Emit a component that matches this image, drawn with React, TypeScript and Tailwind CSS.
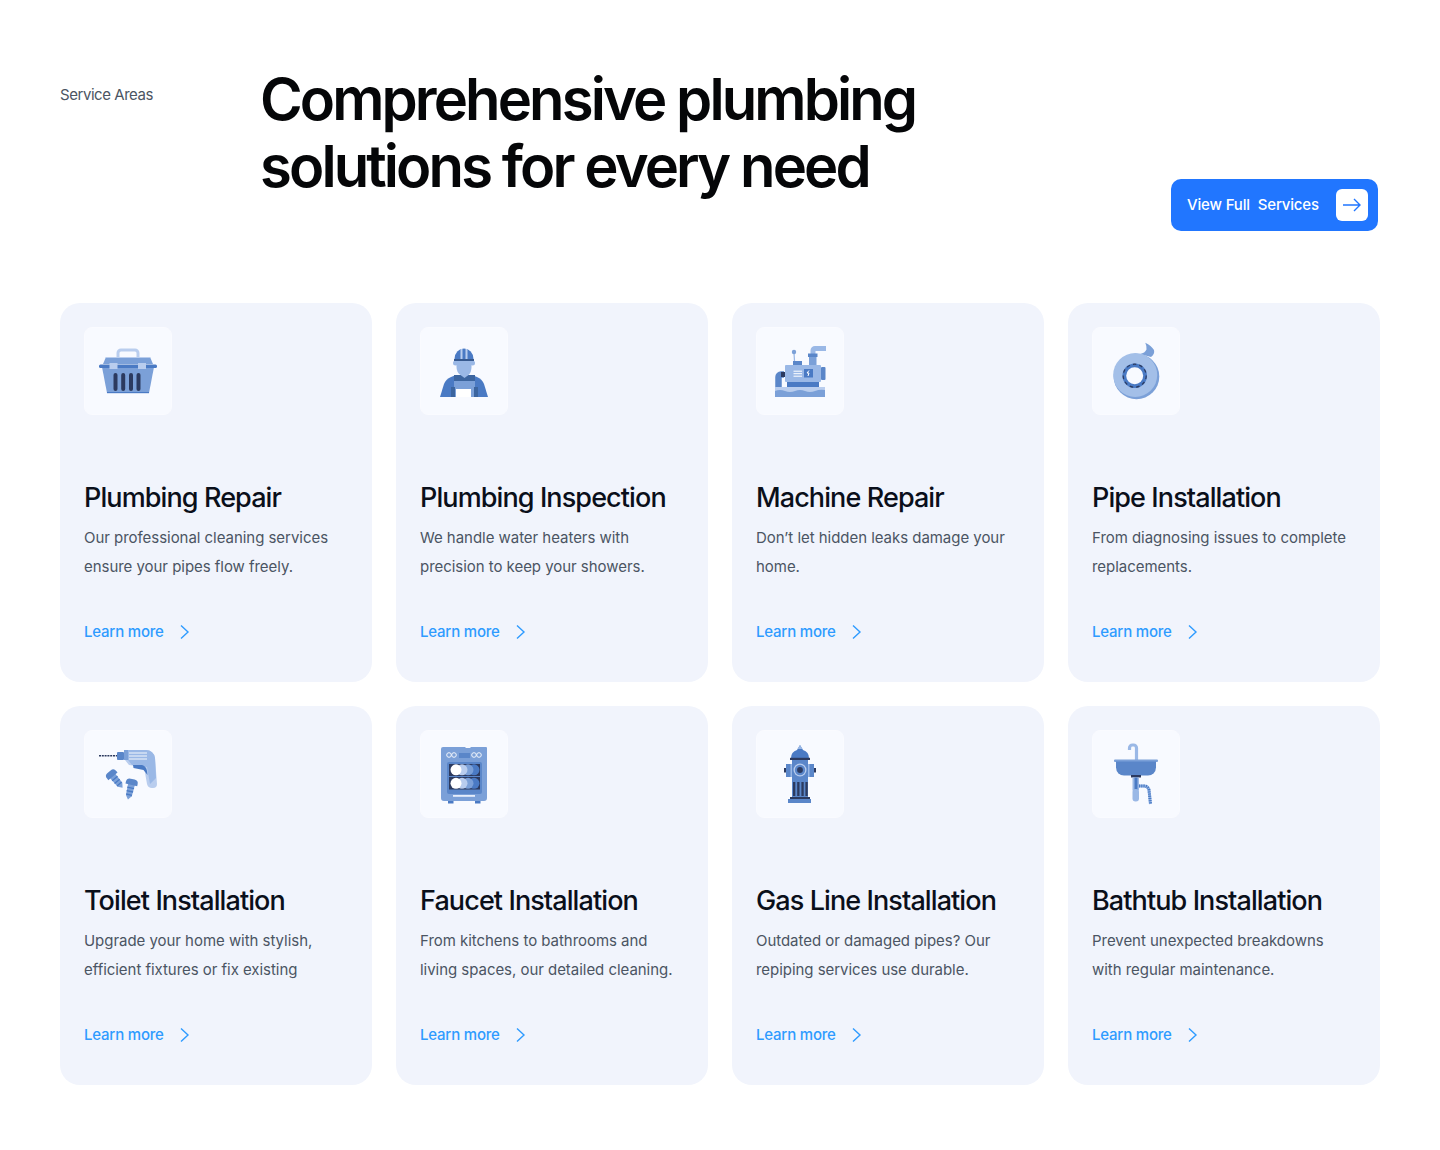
import React from "react";

const M = "#5a86c9";
const L = "#9ab8e6";
const P = "#b9cdee";
const D = "#2c3a5f";
const B = "#4a7ac4";
const S = "#7ba0d8";

const Basket = () => (
  <>
    <path d="M34 31v-5a3 3 0 0 1 3-3h14a3 3 0 0 1 3 3v5" fill="none" stroke={P} strokeWidth="3" />
    <path d="M22 30h44l3 7H19z" fill={S} />
    <path d="M22 30h44l0.500 1H21.500z" fill={P} />
    <path d="M18 40h52l-5 26H23z" fill={S} />
    <rect x="15" y="37.500" width="58" height="3.500" rx="1.500" fill={B} />
    <rect x="23" y="65" width="42" height="1.200" fill={B} />
    <rect x="25.500" y="36" width="8" height="6" fill={P} />
    <rect x="54" y="36" width="8" height="6" fill={P} />
    {[29.5, 37.2, 45, 52.5].map((x) => (
      <rect key={x} x={x} y="46" width="4" height="18" rx="2" fill={D} />
    ))}
  </>
);
const Worker = () => (
  <>
    <path d="M20 70l4-13q2-5 7-7l5-2h16l5 2q5 2 7 7l4 13z" fill={B} />
    <path d="M34 70V53h21v17z" fill={S} />
    <path d="M34 48h21v6H34z" fill="#3c659f" />
    <path d="M31 60h4v10h-4zM54 60h4v10h-4z" fill="#3c659f" />
    <rect x="36" y="62" width="15" height="8" fill="#fff" />
    <circle cx="35.500" cy="36" r="2.500" fill={L} />
    <circle cx="52.500" cy="36" r="2.500" fill={L} />
    <path d="M36.500 32h15v8q0 5-3 8l-4 3-4-3q-4-3-4-8z" fill={L} />
    <path d="M34.500 32a9.500 10.500 0 0 1 19 0v0.500h-19z" fill={B} />
    <path d="M40.500 22h2v10h-2zM45.500 22h2v10h-2z" fill={P} />
    <rect x="34" y="32" width="20" height="2" fill="#36598f" />
  </>
);
const Machine = () => (
  <>
    <path d="M22.500 62V50a2.500 2.500 0 0 1 2.500-2.500h3" fill="none" stroke={M} strokeWidth="6.500" />
    <rect x="25" y="45" width="4.500" height="5" fill={D} />
    <rect x="19" y="60" width="50" height="10" fill={P} />
    <path d="M19 64q5-2 10 0t10 0 10 0 10 0 10-1v7H19z" fill={S} />
    <rect x="31" y="55" width="32" height="5" fill={B} />
    <rect x="29" y="38" width="36" height="17" rx="1" fill={L} />
    <rect x="65" y="40" width="4.500" height="13" rx="1" fill={M} />
    <rect x="48" y="42" width="9" height="8.500" fill={B} />
    <path d="M53 43.500l-2 2.500h2l-1 3" stroke="#fff" strokeWidth="1" fill="none" />
    <path d="M37.500 44.200h8.500M37.500 46.700h8.500M37.500 49.200h8.500" stroke="#fff" strokeWidth="1" />
    <rect x="37" y="34" width="9" height="4" fill={M} />
    <path d="M38.500 34l-0.500-8" stroke={L} strokeWidth="1.300" />
    <circle cx="38" cy="25" r="2.200" fill={S} />
    <path d="M57 27v-3.500a2 2 0 0 1 2-2h11" fill="none" stroke={L} strokeWidth="5" />
    <rect x="52" y="26.500" width="9.500" height="3.500" fill={M} />
    <rect x="53" y="30" width="7.500" height="8" fill={S} />
  </>
);
const Tape = () => (
  <>
    <path d="M53.300 15.700q6 3 8.700 7.300 1 4-3 7l-11-3q5-1 6.500-4.500 0.500-3-1.200-6.800z" fill={S} />
    <circle cx="44.500" cy="49.500" r="22.800" fill={S} />
    <circle cx="43.200" cy="48" r="22" fill="#a3bfe8" />
    <circle cx="42.700" cy="48.700" r="12.300" fill={B} />
    <circle cx="42.700" cy="48.700" r="11.500" fill="none" stroke={D} strokeWidth="1.200" strokeDasharray="3.500 3" />
    <circle cx="42.700" cy="48.700" r="8.500" fill="#f8faff" />
  </>
);
const Screw = ({ x, y, r }: { x: number; y: number; r: number }) => (
  <g transform={`translate(${x} ${y}) rotate(${r})`}>
    <path d="M-3.500 2L3.500 2L3 14L0 18L-3 14z" fill={S} />
    <path d="M-3.500 6h7M-3.300 9.500h6.600M-3 13h6" stroke={B} strokeWidth="1.300" />
    <path d="M-6 3v-2q0-4 4-4h4q4 0 4 4v2z" fill={M} />
  </g>
);
const Drill = () => (
  <>
    <path d="M15 25.700h18" stroke={D} strokeWidth="1.500" strokeDasharray="2 0.800" />
    <path d="M41 20h21a9 9 0 0 1 9 8l2 26q0 4-4 4h-1q-4 0-5-4l-3-17-15-2-4-5z" fill={P} />
    <path d="M41 20h21a9 9 0 0 1 9 8l1 20-6 6-3-17-15-2-4-5z" fill={L} />
    <path d="M45 23h18M45 26h18M45 29h18" stroke="#fff" strokeWidth="0.900" />
    <path d="M49 35h9q4 1 5 6l0.500 4-4-5-10-2z" fill={B} />
    <rect x="33" y="22" width="7" height="8" rx="1" fill={M} />
    <path d="M40 20h4v10h-4z" fill={S} />
    <Screw x={27} y={44} r={-40} />
    <Screw x={48} y={52} r={13} />
  </>
);
const Washer = () => (
  <>
    <rect x="28" y="70" width="5.500" height="3.500" fill={B} />
    <rect x="55" y="70" width="5.500" height="3.500" fill={B} />
    <path d="M23 17h22l1 1h4l1-1h15a1 1 0 0 1 1 1v50a3 3 0 0 1-3 3H24a3 3 0 0 1-3-3V19a2 2 0 0 1 2-2z" fill={S} />
    <rect x="39" y="23" width="11" height="5" fill={M} />
    {[29, 34, 54, 59].map((x) => (
      <circle key={x} cx={x} cy="25" r="2.300" fill="none" stroke="#f1f5fc" strokeWidth="1" />
    ))}
    <rect x="27" y="32" width="35" height="32" rx="2" fill={M} />
    <rect x="29" y="34" width="31" height="12" fill={D} />
    <rect x="29" y="47" width="31" height="12.500" fill={D} />
    {[34, 47.5].map((y) => (
      <g key={y}>
        <circle cx="54" cy={y + 5.800} r="5.500" fill={B} />
        <circle cx="48" cy={y + 5.800} r="5.500" fill={S} />
        <circle cx="42" cy={y + 5.800} r="5.500" fill={P} />
        <circle cx="36" cy={y + 5.800} r="5.500" fill="#fff" />
      </g>
    ))}
    <rect x="33" y="65" width="22" height="1.800" fill="#e6eefb" />
  </>
);
const Hydrant = () => (
  <>
    <path d="M35 28q0-6 6-8l3-5 3 5q6 2 6 8z" fill={B} />
    <path d="M41.500 19l2.500-4 2.500 4z" fill={L} />
    <rect x="34" y="27.800" width="20" height="2.200" fill={D} />
    <rect x="36" y="30" width="16" height="38" fill={M} />
    <rect x="30" y="34" width="6" height="13" fill={M} />
    <rect x="52" y="34" width="6" height="13" fill={M} />
    <rect x="34.500" y="34" width="1.500" height="13" fill={L} />
    <rect x="52" y="34" width="1.500" height="13" fill={L} />
    <rect x="28" y="38" width="2" height="4.500" fill={D} />
    <rect x="58" y="38" width="2" height="4.500" fill={D} />
    <circle cx="44" cy="40" r="6.500" fill={P} />
    <circle cx="44" cy="40" r="5.200" fill={M} />
    <circle cx="44" cy="40" r="2.900" fill={D} />
    {[37, 41.2, 45.4, 49.4].map((x) => (
      <rect key={x} x={x} y="52" width="2.300" height="14" fill={D} />
    ))}
    <rect x="34" y="67" width="20" height="2" fill={D} />
    <rect x="32" y="69" width="23" height="4" fill={M} />
  </>
);
const Sink = () => (
  <>
    <path d="M37.500 20v-2a3 3 0 0 1 3-3h1a3 3 0 0 1 3 3v12" fill="none" stroke={L} strokeWidth="3.200" />
    <rect x="22" y="29.500" width="44" height="2.500" rx="1" fill={S} />
    <path d="M24 31.500h40v6a8 8 0 0 1-8 8H32a8 8 0 0 1-8-8z" fill={M} />
    <rect x="39" y="45" width="10" height="2.500" fill={D} />
    <rect x="40.500" y="47.500" width="6.500" height="13" fill={L} />
    <rect x="42.500" y="47.500" width="3" height="13" fill={B} />
    <rect x="40.500" y="59" width="6.500" height="12.500" rx="3" fill={L} />
    <path d="M47 56h5q4 0 5 4l1.500 14" fill="none" stroke={L} strokeWidth="3" />
    <path d="M47 56h5q4 0 5 4l1.500 14" fill="none" stroke={B} strokeWidth="3" strokeDasharray="1.200 1" />
  </>
);

const cards = [
  { Icon: Basket, t: "Plumbing Repair", a: "Our professional cleaning services", b: "ensure your pipes flow freely." },
  { Icon: Worker, t: "Plumbing Inspection", a: "We handle water heaters with", b: "precision to keep your showers." },
  { Icon: Machine, t: "Machine Repair", a: "Don’t let hidden leaks damage your", b: "home." },
  { Icon: Tape, t: "Pipe Installation", a: "From diagnosing issues to complete", b: "replacements." },
  { Icon: Drill, t: "Toilet Installation", a: "Upgrade your home with stylish,", b: "efficient fixtures or fix existing" },
  { Icon: Washer, t: "Faucet Installation", a: "From kitchens to bathrooms and", b: "living spaces, our detailed cleaning." },
  { Icon: Hydrant, t: "Gas Line Installation", a: "Outdated or damaged pipes? Our", b: "repiping services use durable." },
  { Icon: Sink, t: "Bathtub Installation", a: "Prevent unexpected breakdowns", b: "with regular maintenance." },
];

export default function App() {
  return (
    <div className="w-[1440px] h-[1150px] bg-white px-[60px] pt-[66px] font-['Inter',sans-serif]">
      <div className="flex h-[237px]">
        <div className="w-[200px] pt-[20px] text-[15px] leading-[18px] tracking-[-0.45px] text-[#4b5563]">Service Areas</div>
        <h1 className="text-[58px] leading-[67px] font-semibold tracking-[-2.9px] text-[#050608] w-[700px]">
          Comprehensive plumbing
          <br />
          solutions for every need
        </h1>
        <div className="ml-auto mr-[2px] mt-[113px] h-[52px] w-[207px] flex items-center justify-between pl-4 pr-[10px] rounded-[10px] bg-[#2176ff] text-white">
          <span className="text-[15px] font-medium tracking-[-0.15px] whitespace-pre">View Full  Services</span>
          <span className="w-8 h-8 rounded-md bg-white flex items-center justify-center">
            <svg width="20" height="14" viewBox="0 0 20 14" fill="none" stroke="#2176ff" strokeWidth="1.4">
              <path d="M1 7h17M12 1l6 6-6 6" />
            </svg>
          </span>
        </div>
      </div>
      <div className="grid grid-cols-4 gap-6">
        {cards.map(({ Icon, t, a, b }) => (
          <div key={t} className="h-[379px] rounded-[20px] bg-[#f1f4fc] p-6 flex flex-col">
            <div className="w-[88px] h-[88px] rounded-lg border border-[#fafbff] bg-[#f8faff]">
              <svg width="86" height="86" viewBox="1 1 86 86">
                <Icon />
              </svg>
            </div>
            <h3 className="mt-[63px] text-[27px] leading-[40px] font-medium tracking-[-0.9px] text-[#0a0f1a] whitespace-nowrap">{t}</h3>
            <p className="mt-[5px] text-[15px] leading-[29px] tracking-[-0.04px] text-[#4b5563] whitespace-nowrap">
              {a}
              <br />
              {b}
            </p>
            <div className="mt-[39px] flex items-center text-[#2e9bff] text-[15px] leading-[24px] font-medium tracking-[-0.2px]">
              <span className="w-[95px]">Learn more</span>
              <svg width="12" height="16" viewBox="0 0 12 16" fill="none" stroke="#2e9bff" strokeWidth="1.4">
                <path d="M2 1.500l7 6.500-7 6.500" />
              </svg>
            </div>
          </div>
        ))}
      </div>
    </div>
  );
}
